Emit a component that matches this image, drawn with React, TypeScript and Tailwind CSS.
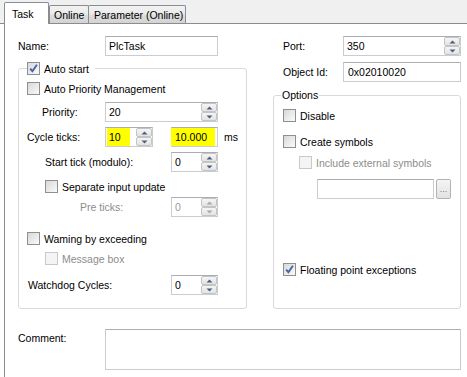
import React from "react";

const Arrow = ({ up, disabled }: { up?: boolean; disabled?: boolean }) => (
  <svg width="7" height="4" viewBox="0 0 7 4">
    <polygon
      points={up ? "0.5,3.5 3.5,0.5 6.5,3.5" : "0.5,0.5 3.5,3.5 6.5,0.5"}
      fill={disabled ? "#a8a8a8" : "#4c5d7e"}
    />
  </svg>
);

const Spinner = ({ disabled }: { disabled?: boolean }) => (
  <div className="flex flex-col w-[16px] self-stretch">
    <div className="h-[9px] flex items-center justify-center border border-[#c4c4c4] rounded-[2px] bg-[linear-gradient(#f5f5f5,#e3e3e3)]">
      <Arrow up disabled={disabled} />
    </div>
    <div className="h-[9px] flex items-center justify-center border border-[#c4c4c4] rounded-[2px] bg-[linear-gradient(#f5f5f5,#e3e3e3)]">
      <Arrow disabled={disabled} />
    </div>
  </div>
);

const Box = ({
  className = "",
  children,
  spin,
  disabled,
  pad = "pl-[3px]",
}: {
  className?: string;
  children?: React.ReactNode;
  spin?: boolean;
  disabled?: boolean;
  pad?: string;
}) => (
  <div
    className={`flex items-center h-[20px] bg-white border border-[#c9ccd1] border-t-[#abadb3] ${className}`}
  >
    <div className={`flex-1 flex items-center h-full ${pad} ${disabled ? "text-[#9a9a9a]" : ""}`}>{children}</div>
    {spin && <Spinner disabled={disabled} />}
  </div>
);

const Check = ({ checked, disabled }: { checked?: boolean; disabled?: boolean }) => (
  <div
    className={`relative w-[13px] h-[13px] shrink-0 border ${
      disabled
        ? "border-[#c9c9c9] bg-[#f4f4f4]"
        : "border-[#8e8f8f] bg-[linear-gradient(135deg,#d8d8d8,#fafafa)]"
    }`}
  >
    {checked && (
      <svg className="absolute left-0 top-0" width="11" height="11" viewBox="0 0 11 11">
        <path d="M2.2 5.6 L4.4 8.2 L8.9 1.8" fill="none" stroke="#4561a8" strokeWidth="1.9" />
      </svg>
    )}
  </div>
);

const CB = ({
  label,
  checked,
  disabled,
  className = "",
}: {
  label: string;
  checked?: boolean;
  disabled?: boolean;
  className?: string;
}) => (
  <div className={`flex items-center h-[13px] gap-[4px] ${className}`}>
    <Check checked={checked} disabled={disabled} />
    <span className={disabled ? "text-[#8d8d8d]" : ""}>{label}</span>
  </div>
);

export default function App() {
  return (
    <div className="w-[467px] h-[377px] overflow-hidden bg-white text-[10.5px] leading-[12px] text-black font-['Liberation_Sans',Arial,sans-serif]">
      {/* Tabs */}
      <div className="h-[24px] bg-[#f0f0f0] border-b border-[#898c95] flex items-end pl-[4px]">
        <div className="relative z-10 -mb-px h-[22px] w-[45px] bg-white border border-b-0 border-[#898c95] rounded-t-[2px] pl-[7px] pt-[5px]">
          Task
        </div>
        <div className="h-[18px] w-[40px] border border-b-0 border-[#898c95] rounded-t-[2px] bg-[linear-gradient(#f2f2f2,#ebebeb_45%,#dddddd_55%,#d3d3d3)] pl-[4px] pt-[3px]">
          Online
        </div>
        <div className="-ml-px h-[18px] w-[98px] border border-b-0 border-[#898c95] rounded-t-[2px] bg-[linear-gradient(#f2f2f2,#ebebeb_45%,#dddddd_55%,#d3d3d3)] pl-[5px] pt-[3px]">
          Parameter (Online)
        </div>
      </div>

      {/* Panel */}
      <div className="ml-[4px] border-l border-[#898c95] h-[353px] pl-[13px] pt-[12px]">
        <div className="flex">
          {/* Left column */}
          <div className="w-[229px]">
            <div className="flex items-center h-[20px]">
              <span className="w-[87px]">Name:</span>
              <Box className="w-[113px]">PlcTask</Box>
            </div>

            <div className="relative mt-[12px] h-[241px] border border-[#d9d9d9] rounded-[3px]">
              <div className="absolute -top-[7px] left-[8px] bg-white pr-[6px]">
                <CB label="Auto start" checked />
              </div>

              <CB label="Auto Priority Management" className="mt-[13px] ml-[8px]" />

              <div className="flex items-center h-[20px] mt-[7px]">
                <span className="w-[86px] pl-[23px]">Priority:</span>
                <Box className="w-[113px]" spin>20</Box>
              </div>

              <div className="flex items-center h-[20px] mt-[5px]">
                <span className="w-[86px] pl-[8px]">Cycle ticks:</span>
                <Box className="w-[48px]" spin pad="pl-[1px]">
                  <span className="inline-block h-[18px] w-[23px] bg-[#ffff00] pl-[2px] leading-[18px]">10</span>
                </Box>
                <Box className="w-[47px] ml-[18px]" pad="pl-0">
                  <span className="inline-block -ml-px h-[18px] w-[44px] bg-[#ffff00] pl-[4px] leading-[18px]">
                    10.000
                  </span>
                </Box>
                <span className="ml-[6px]">ms</span>
              </div>

              <div className="flex items-center h-[20px] mt-[5px]">
                <span className="w-[152px] pl-[26px]">Start tick (modulo):</span>
                <Box className="w-[47px]" spin>0</Box>
              </div>

              <CB label="Separate input update" className="mt-[8px] ml-[26px]" />

              <div className="flex items-center h-[20px] mt-[4px]">
                <span className="w-[152px] pl-[61px] text-[#8d8d8d]">Pre ticks:</span>
                <Box className="w-[47px]" spin disabled>0</Box>
              </div>

              <CB label="Waming by exceeding" className="mt-[15px] ml-[8px]" />
              <CB label="Message box" disabled className="mt-[7px] ml-[26px]" />

              <div className="flex items-center h-[20px] mt-[10px]">
                <span className="w-[152px] pl-[9px]">Watchdog Cycles:</span>
                <Box className="w-[47px]" spin>0</Box>
              </div>
            </div>
          </div>

          {/* Right column */}
          <div className="ml-[26px] w-[188px]">
            <div className="flex items-center h-[20px]">
              <span className="w-[70px] pl-[10px]">Port:</span>
              <Box className="w-[118px]" spin>350</Box>
            </div>
            <div className="flex items-center h-[20px] mt-[6px]">
              <span className="w-[70px] pl-[10px]">Object Id:</span>
              <Box className="w-[118px]" pad="pl-[4px]">0x02010020</Box>
            </div>

            <div className="relative mt-[13px] h-[214px] border border-[#d9d9d9] rounded-[3px]">
              <div className="absolute -top-[7px] left-[7px] bg-white px-[1px]">Options</div>

              <CB label="Disable" className="mt-[13px] ml-[9px]" />
              <CB label="Create symbols" className="mt-[13px] ml-[9px]" />
              <CB label="Include external symbols" disabled className="mt-[8px] ml-[25px]" />
              <div className="flex items-center mt-[10px] ml-[43px]">
                <Box className="w-[117px]" />
                <div className="ml-[2px] w-[15px] h-[20px] border border-[#b3b3b3] rounded-[2px] bg-[linear-gradient(#f4f4f4,#e2e2e2)] flex items-end justify-center pb-[4px] text-[9px] leading-[9px] text-[#777]">
                  ...
                </div>
              </div>
              <CB label="Floating point exceptions" checked className="mt-[64px] ml-[9px]" />
            </div>
          </div>
        </div>

        {/* Comment */}
        <div className="flex mt-[20px]">
          <span className="w-[87px] pt-[3px]">Comment:</span>
          <div className="w-[356px] h-[41px] bg-white border border-[#c9ccd1] border-t-[#abadb3]" />
        </div>
      </div>
    </div>
  );
}
